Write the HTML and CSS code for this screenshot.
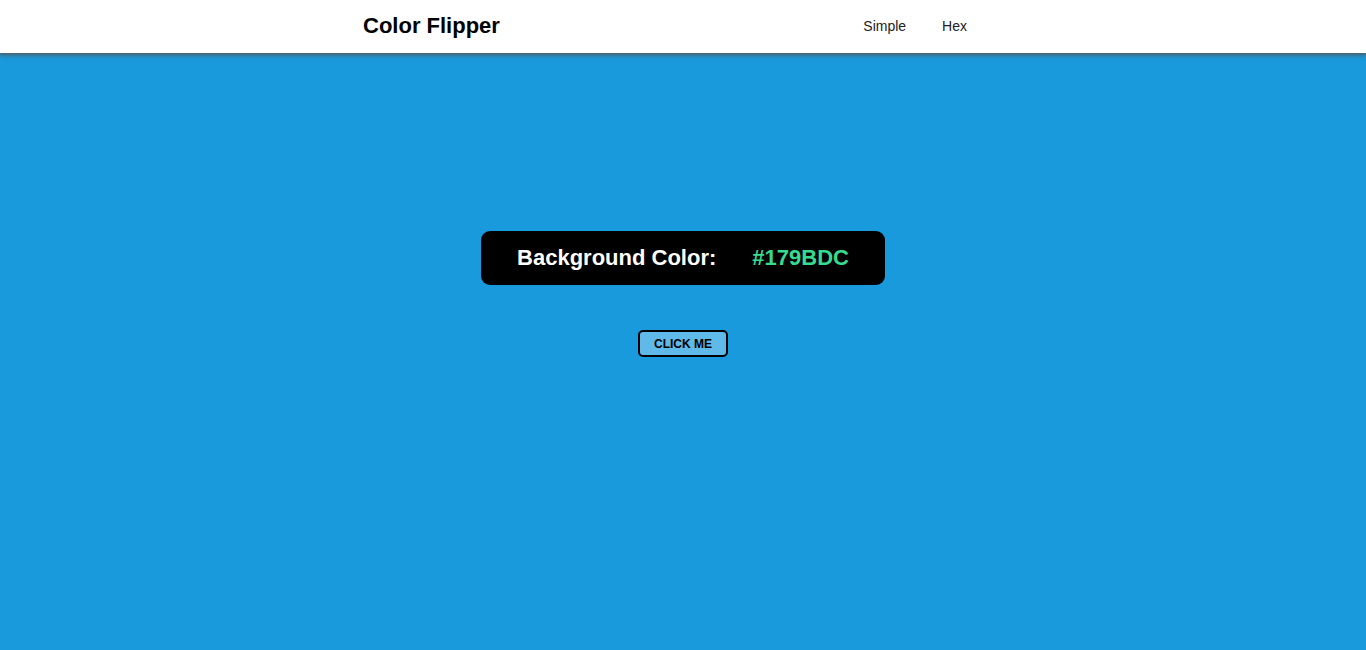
FILE: index.html
```html
<!DOCTYPE html>
<html lang="en">
<head>
<meta charset="utf-8">
<meta name="viewport" content="width=device-width, initial-scale=1">
<title>Color Flipper</title>
<link rel="stylesheet" href="styles.css">
</head>
<body>
<header class="header">
  <nav class="nav">
    <h1 class="brand">Color Flipper</h1>
    <ul class="links">
      <li><a href="#simple">Simple</a></li>
      <li><a href="#hex">Hex</a></li>
    </ul>
  </nav>
</header>
<main class="main">
  <h2 class="readout"><span>Background Color:</span><span class="value">#179BDC</span></h2>
  <button class="flip" type="button">CLICK ME</button>
</main>
</body>
</html>
```

FILE: styles.css
```css
* { box-sizing: border-box; }
body {
  margin: 0;
  min-height: 100vh;
  display: flex;
  flex-direction: column;
  background: #189adc;
  color: #000;
  font-family: "Liberation Sans", Arial, sans-serif;
}
.header {
  background: #fff;
  box-shadow: 0 1px 5px 1px #555;
}
.nav {
  max-width: 640px;
  margin: 0 auto;
  padding: 13px 36px 15px 0;
  display: flex;
  justify-content: space-between;
  align-items: center;
}
.brand {
  margin: 0;
  font-size: 22px;
  line-height: 25px;
}
.links {
  display: flex;
  gap: 36px;
  margin: 0;
  padding: 0;
  list-style: none;
  font-size: 14px;
}
.links a { color: #222; text-decoration: none; }
.main {
  flex: 1;
  display: flex;
  flex-direction: column;
  align-items: center;
  justify-content: center;
  gap: 45px;
  padding-bottom: 116px;
}
.readout {
  display: flex;
  flex-wrap: wrap;
  gap: 36px;
  margin: 0;
  padding: 14px 36px;
  border-radius: 9px;
  background: #000;
  color: #fff;
  font-size: 22px;
  line-height: 26px;
}
.value { color: #35dc90; }
.flip {
  padding: 5px 14px 4px;
  border: 2px solid #000;
  border-radius: 5px;
  background: #5fb9e9;
  color: #000;
  font: bold 12px/14px "Liberation Sans", Arial, sans-serif;
  cursor: pointer;
}
```
